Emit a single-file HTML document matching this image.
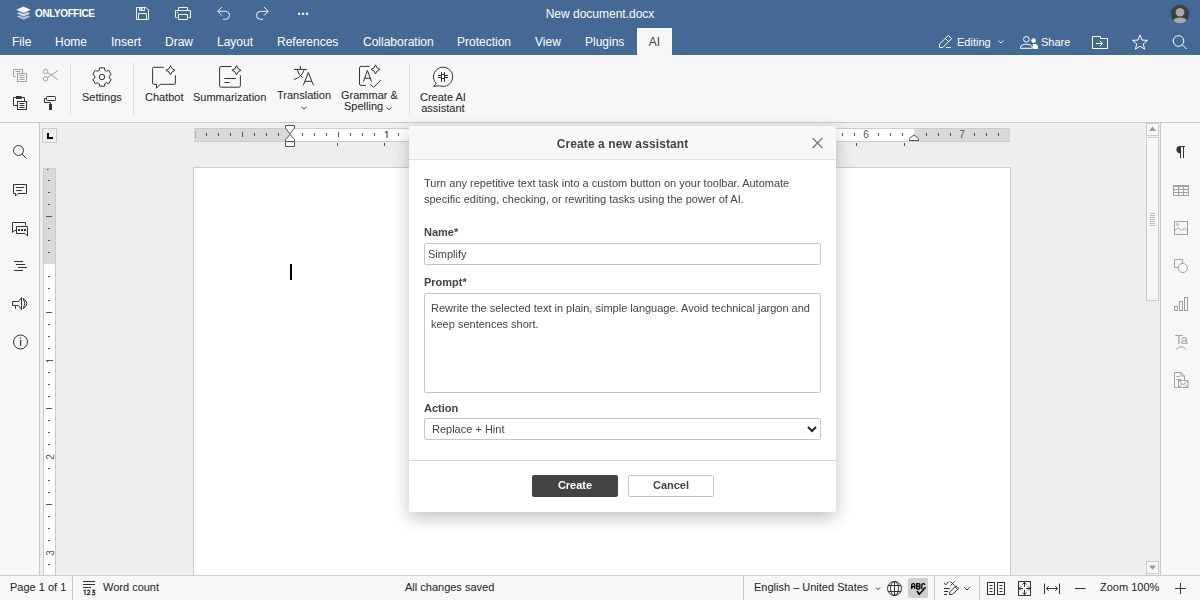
<!DOCTYPE html><html><head><meta charset="utf-8"><style>
*{box-sizing:border-box;margin:0;padding:0}
html,body{width:1200px;height:600px;overflow:hidden;background:#eeeeee;font-family:"Liberation Sans",sans-serif;color:#444}
.abs{position:absolute}
svg{position:absolute;overflow:visible}
#hdr{position:absolute;left:0;top:0;width:1200px;height:55px;background:#446995}
.tab{position:absolute;top:28px;height:27px;color:#fff;font-size:12px;line-height:29px;padding:0 12px;white-space:nowrap}
#toolbar{position:absolute;left:0;top:55px;width:1200px;height:68px;background:#f7f7f7;border-bottom:1px solid #cbcbcb}
.sep{position:absolute;top:8px;width:1px;height:52px;background:#dfdfdf}
.lbl{position:absolute;font-size:11px;color:#222;text-align:center;line-height:11px;white-space:nowrap}
#lside{position:absolute;left:0;top:123px;width:40px;height:452px;background:#f7f7f7;border-right:1px solid #cbcbcb}
#rside{position:absolute;left:1160px;top:123px;width:40px;height:452px;background:#f7f7f7;border-left:1px solid #cbcbcb}
#status{position:absolute;left:0;top:575px;width:1200px;height:25px;background:#f7f7f7;border-top:1px solid #cbcbcb}
.st{position:absolute;font-size:11px;color:#222;line-height:11px;white-space:nowrap;top:6px}
#page{position:absolute;left:193px;top:167px;width:818px;height:420px;background:#fff;border:1px solid #cbcbcb}
#dlg{position:absolute;left:409px;top:126px;width:427px;height:386px;background:#fff;border-radius:3px;box-shadow:0 6px 17px rgba(0,0,0,0.24);overflow:hidden;will-change:transform}
#dlg .t{position:absolute;font-size:11px;color:#444;line-height:16px;white-space:nowrap}
#dlg .b{position:absolute;font-size:11px;font-weight:bold;color:#444;line-height:11px;white-space:nowrap}
.inp{position:absolute;left:15px;width:397px;border:1px solid #c6c6c6;border-radius:2px;background:#fff}
</style></head><body>
<div id="hdr">
<div class="tab" style="left:0px">File</div>
<div class="tab" style="left:43px">Home</div>
<div class="tab" style="left:99px">Insert</div>
<div class="tab" style="left:153px">Draw</div>
<div class="tab" style="left:205px">Layout</div>
<div class="tab" style="left:265px">References</div>
<div class="tab" style="left:351px">Collaboration</div>
<div class="tab" style="left:445px">Protection</div>
<div class="tab" style="left:523px">View</div>
<div class="tab" style="left:573px">Plugins</div>
<div class="abs" style="left:637px;top:28px;width:35px;height:27px;background:#f7f7f7;color:#444;font-size:12px;line-height:29px;text-align:center">AI</div>
<div class="abs" style="left:0;top:0;width:1200px;height:28px;line-height:29px;text-align:center;color:#fff;font-size:12px">New document.docx</div>
<div class="abs" style="left:35px;top:7px;font-size:10px;font-weight:bold;color:#fff;letter-spacing:-0.4px;line-height:13px">ONLYOFFICE</div>
<div class="abs" style="left:957px;top:37px;font-size:11px;color:#fff;line-height:11px">Editing</div>
<div class="abs" style="left:1041px;top:37px;font-size:11px;color:#fff;line-height:11px">Share</div>
<svg style="left:0;top:0" width="1200" height="55" viewBox="0 0 1200 55">
<g fill="#fff">
 <path d="M23.5 6.8 L30.3 9.8 L23.5 12.8 L16.8 9.8 Z" stroke="#fff" stroke-width="0.4" stroke-linejoin="round"/>
 <path d="M16.8 13.3 L19.3 12.2 L23.5 14.1 L27.8 12.2 L30.3 13.3 L23.5 16.4 Z" opacity="0.78"/>
 <path d="M16.8 16.5 L19.3 15.4 L23.5 17.3 L27.8 15.4 L30.3 16.5 L23.5 19.8 Z" opacity="0.6"/>
</g>
<g fill="none" stroke="#fff" stroke-width="1" opacity="0.92">
 <path d="M136.5 7.5 H146 L148.5 10 V19.5 H136.5 Z"/>
 <path d="M138.5 19.5 V13.5 H146.5 V19.5"/>
 <path d="M139.5 7.5 V10.5 H144.5 V7.5"/>
 <path d="M177.5 17.5 H175.5 V10.5 H190.5 V17.5 H188.5"/>
 <path d="M178.5 10.5 V7.5 H187.5 V10.5"/>
 <path d="M178.5 14.5 H187.5 V19.5 H178.5 Z"/>
 <path d="M222 7 L217.8 11.3 L222 15.6 M218 11.3 H225.5 A4 4 0 0 1 225.5 19.3 H223"/>
 <path d="M264 7 L268.2 11.3 L264 15.6 M268 11.3 H260.5 A4 4 0 0 0 260.5 19.3 H263"/>
</g>
<g fill="#fff" opacity="0.92">
 <rect x="177" y="12" width="1.2" height="1.2"/>
 <rect x="140.5" y="8" width="2" height="2"/>
 <rect x="298" y="12.7" width="2.2" height="2.2"/>
 <rect x="302" y="12.7" width="2.2" height="2.2"/>
 <rect x="306" y="12.7" width="2.2" height="2.2"/>
</g>
<circle cx="1180" cy="14" r="9.3" fill="#3b3f46"/>
<circle cx="1180" cy="12.2" r="4.3" fill="#a8aab0"/>
<path d="M1173.30 20.46 A7.6 5.8 0 0 1 1186.70 20.46 A9.3 9.3 0 0 1 1173.30 20.46 Z" fill="#a8aab0"/>
<g fill="none" stroke="#fff" stroke-width="1">
 <path d="M939.5 47.5 V44.2 L948.3 35.4 L951.6 38.7 L942.8 47.5 Z M945.4 38.4 L948.6 41.6"/>
 <path d="M946 47.5 H951"/>
 <path d="M998.5 40.5 L1001 43 L1003.5 40.5"/>
 <circle cx="1026.4" cy="39.3" r="2.8"/>
 <path d="M1020.5 48.3 V47.3 C1020.5 43.2 1032.3 43.2 1032.3 47.3 V48.3 Z"/>
 <path d="M1092.5 36.5 H1100.5 V38.5 H1107.5 V48.5 H1092.5 Z"/>
 <path d="M1096 43.5 H1102.5 M1099.8 40.8 L1102.5 43.5 L1099.8 46.2"/>
 <path d="M1140.00 34.90 L1142.00 40.05 L1147.51 40.36 L1143.23 43.85 L1144.64 49.19 L1140.00 46.20 L1135.36 49.19 L1136.77 43.85 L1132.49 40.36 L1138.00 40.05 Z" stroke-linejoin="round"/>
 <circle cx="1178.5" cy="41" r="5.3"/>
 <path d="M1182.3 44.8 L1186.5 49"/>
</g>
<g fill="#fff"><circle cx="1033.6" cy="40.6" r="2.3"/><path d="M1032.8 49 V44 H1035 C1037 44 1038 45 1038 47 V49 Z"/></g>
</svg>
</div>
<div id="toolbar">
<div class="sep" style="left:70px"></div>
<div class="sep" style="left:133px"></div>
<div class="sep" style="left:409px"></div>
<div class="lbl" style="left:82px;top:37px">Settings</div>
<div class="lbl" style="left:145px;top:37px">Chatbot</div>
<div class="lbl" style="left:193px;top:37px">Summarization</div>
<div class="lbl" style="left:277px;top:35px">Translation</div>
<div class="lbl" style="left:341px;top:35px">Grammar &amp;</div>
<div class="lbl" style="left:344px;top:46px">Spelling</div>
<div class="lbl" style="left:420px;top:37px">Create AI<br>assistant</div>
</div>
<svg style="left:0;top:0" width="1200" height="123" viewBox="0 0 1200 123">
<g fill="none" stroke="#a0a0a0" stroke-width="1">
 <path d="M15.5 76.5 H13.5 V69.5 H22.5 V73"/>
 <rect x="17.5" y="73.5" width="9" height="8"/>
 <path d="M19.5 75.5 H24.5 M19.5 77.5 H24.5 M19.5 79.5 H24.5"/>
 <path d="M15.5 71.5 H20.5"/>
 <circle cx="45.5" cy="71.5" r="2.2"/><circle cx="45.5" cy="78.8" r="2.2"/>
 <path d="M47.5 72.6 L58 79.8 M47.5 77.7 L58 70.5"/>
</g>
<g fill="none" stroke="#333" stroke-width="1">
 <path d="M17 97.5 H13.5 V105.5 H17"/>
 <path d="M21 97.5 H24.5 V101"/>
 <rect x="17.5" y="101.5" width="9" height="8"/>
 <path d="M19.5 103.5 H24.5 M19.5 105.5 H24.5 M19.5 107.5 H24.5"/>
 <rect x="46.5" y="96.5" width="9" height="4" rx="0.8"/>
 <path d="M46.5 98.5 H44.5 V102.5 H50.5 V104"/>
</g>
<g fill="#333"><rect x="16" y="96" width="5.5" height="3"/><rect x="49" y="104" width="3" height="6"/></g>
<g fill="none" stroke="#333" stroke-width="1">
 <path d="M99.19 70.37 L99.54 67.82 L104.46 67.82 L104.81 70.37 A7.2 7.2 0 0 1 106.33 71.25 L108.72 70.28 L111.18 74.54 L109.15 76.12 A7.2 7.2 0 0 1 109.15 77.88 L111.18 79.46 L108.72 83.72 L106.33 82.75 A7.2 7.2 0 0 1 104.81 83.63 L104.46 86.18 L99.54 86.18 L99.19 83.63 A7.2 7.2 0 0 1 97.67 82.75 L95.28 83.72 L92.82 79.46 L94.85 77.88 A7.2 7.2 0 0 1 94.85 76.12 L92.82 74.54 L95.28 70.28 L97.67 71.25 A7.2 7.2 0 0 1 99.19 70.37 Z"/>
 <circle cx="102" cy="77" r="2.7"/>
 <path d="M163.8 67.3 H153.6 Q152.6 67.3 152.6 68.3 V83.3 Q152.6 84.3 153.6 84.3 H156.5 V88.3 L160.3 84.3 H174.4 Q175.4 84.3 175.4 83.3 V75.3"/>
 <path d="M170.50 65.70 Q171.33 69.47 175.10 70.30 Q171.33 71.13 170.50 74.90 Q169.67 71.13 165.90 70.30 Q169.67 69.47 170.50 65.70Z"/>
 <path d="M231.5 66.5 H221.1 Q219.6 66.5 219.6 68 V85.7 Q219.6 87.2 221.1 87.2 H238.9 Q240.4 87.2 240.4 85.7 V75.3"/>
 <path d="M224.3 78.5 H235.8 M224.3 82.5 H229.8"/>
 <path d="M236.50 65.70 Q237.33 69.47 241.10 70.30 Q237.33 71.13 236.50 74.90 Q235.67 71.13 231.90 70.30 Q235.67 69.47 236.50 65.70Z"/>
 <path d="M294 69.4 H306.9 M300.4 66 V69.4 M297.2 69.6 Q299 75.5 302.5 77.5 M304 70.2 Q301.5 77.5 294 79.5"/>
 <path d="M303.3 85.3 L308.3 72.5 L313.5 85.3 M304.8 81.3 H312"/>
 <path d="M369.8 66.4 H361 Q359.5 66.4 359.5 67.9 V83.9 Q359.5 85.4 361 85.4 H365.9"/>
 <path d="M363.5 81.6 L367.4 70.3 L371.5 81.6 M364.6 78.3 H370.4"/>
 <path d="M375.50 64.90 Q376.31 68.59 380.00 69.40 Q376.31 70.21 375.50 73.90 Q374.69 70.21 371.00 69.40 Q374.69 68.59 375.50 64.90Z"/>
 <path d="M370.3 84 L373.5 87.3 L380.8 80.2"/>
 <path d="M436.2 83.5 A9.6 9.6 0 1 1 439.7 85.8 L433.6 86.4 Z"/>
 <rect x="441.5" y="74.5" width="3" height="4"/>
 <path d="M441.5 72 V74.5 M444.5 72 V74.5 M441.5 78.5 V82 M444.5 78.5 V82 M438 75.5 H441.5 M438 77.5 H441.5 M444.5 75.5 H448 M444.5 77.5 H448"/>
 <path d="M301.5 106.8 L304 109.3 L306.5 106.8 M386.5 107.3 L389 109.8 L391.5 107.3"/>
</g>
</svg>
<div id="lside"></div>
<svg style="left:0;top:123px" width="40" height="452" viewBox="0 123 40 452">
<g fill="none" stroke="#333" stroke-width="1">
 <circle cx="18.5" cy="150.5" r="5"/><path d="M22 154 L26.5 158.5"/>
 <path d="M13.5 184.5 H26.5 V193.5 H18 L15.5 196 V193.5 H13.5 Z"/>
 <path d="M16 187.5 H24 M16 190.5 H22"/>
 <path d="M25.5 225.5 V222.5 H12.5 V232.5 L14.5 230.5 H16"/>
 <path d="M16.5 226.5 H27.5 V236 L25 233.5 H16.5 Z"/>
 <path d="M14 261.5 H23 M16 264.5 H25 M18 267.5 H27 M14 270.5 H23"/>
 <path d="M12.5 301.5 H18.5 L21.5 297.5 V309.5 L18.5 305.5 H12.5 Z M15.5 305.5 V308.8"/>
 <path d="M23.3 298.3 Q26.3 303.5 23.3 308.7 M23.3 298.3 Q30.3 303.5 23.3 308.7"/>
 <circle cx="20.5" cy="342" r="7"/>
</g>
<g fill="#333"><rect x="18" y="229" width="2" height="2"/><rect x="21" y="229" width="2" height="2"/><rect x="24" y="229" width="2" height="2"/>
<rect x="20" y="337.5" width="1.2" height="1.3"/><rect x="20" y="340" width="1.2" height="6"/></g>
</svg>
<div id="page"></div>
<div class="abs" style="left:290px;top:264px;width:2px;height:16px;background:#000"></div>
<div class="abs" style="left:194px;top:128px;width:816px;height:14px;background:#fff;border-top:1px solid #cbcbcb;border-bottom:1px solid #cbcbcb"></div>
<div class="abs" style="left:194px;top:128px;width:96px;height:14px;background:#d9d9d9;border-top:1px solid #cbcbcb;border-bottom:1px solid #cbcbcb"></div>
<div class="abs" style="left:914px;top:128px;width:96px;height:14px;background:#d9d9d9;border-top:1px solid #cbcbcb;border-bottom:1px solid #cbcbcb"></div>
<div class="abs" style="left:43px;top:168px;width:13px;height:407px;background:#fff;border-left:1px solid #cbcbcb;border-right:1px solid #cbcbcb"></div>
<div class="abs" style="left:43px;top:168px;width:13px;height:96px;background:#d9d9d9;border:1px solid #cbcbcb;border-bottom:none"></div>
<div class="abs" style="left:42px;top:128px;width:15px;height:15px;background:#efefef;border:1px solid #cbcbcb"></div>
<svg style="left:0;top:0" width="60" height="160" viewBox="0 0 60 160"><path d="M47 133 H49 V137 H53 V139 H47 Z" fill="#000"/></svg>
<svg style="left:0;top:0" width="1200" height="600" viewBox="0 0 1200 600"><g fill="#555"><rect x="206" y="133" width="1" height="3"/><rect x="218" y="133" width="1" height="3"/><rect x="230" y="133" width="1" height="3"/><rect x="242" y="132" width="1" height="5"/><rect x="254" y="133" width="1" height="3"/><rect x="266" y="133" width="1" height="3"/><rect x="278" y="133" width="1" height="3"/><rect x="302" y="133" width="1" height="3"/><rect x="314" y="133" width="1" height="3"/><rect x="326" y="133" width="1" height="3"/><rect x="338" y="132" width="1" height="5"/><rect x="350" y="133" width="1" height="3"/><rect x="362" y="133" width="1" height="3"/><rect x="374" y="133" width="1" height="3"/><path d="M386.2 131 H387.6 V138 H386.4 V132.6 L385 133.5 V132.3 Z" fill="#555"/><rect x="398" y="133" width="1" height="3"/><rect x="410" y="133" width="1" height="3"/><rect x="422" y="133" width="1" height="3"/><rect x="434" y="132" width="1" height="5"/><rect x="446" y="133" width="1" height="3"/><rect x="458" y="133" width="1" height="3"/><rect x="470" y="133" width="1" height="3"/><text x="482" y="137.6" font-size="10" text-anchor="middle" fill="#555" font-family="Liberation Sans">2</text><rect x="494" y="133" width="1" height="3"/><rect x="506" y="133" width="1" height="3"/><rect x="518" y="133" width="1" height="3"/><rect x="530" y="132" width="1" height="5"/><rect x="542" y="133" width="1" height="3"/><rect x="554" y="133" width="1" height="3"/><rect x="566" y="133" width="1" height="3"/><text x="578" y="137.6" font-size="10" text-anchor="middle" fill="#555" font-family="Liberation Sans">3</text><rect x="590" y="133" width="1" height="3"/><rect x="602" y="133" width="1" height="3"/><rect x="614" y="133" width="1" height="3"/><rect x="626" y="132" width="1" height="5"/><rect x="638" y="133" width="1" height="3"/><rect x="650" y="133" width="1" height="3"/><rect x="662" y="133" width="1" height="3"/><text x="674" y="137.6" font-size="10" text-anchor="middle" fill="#555" font-family="Liberation Sans">4</text><rect x="686" y="133" width="1" height="3"/><rect x="698" y="133" width="1" height="3"/><rect x="710" y="133" width="1" height="3"/><rect x="722" y="132" width="1" height="5"/><rect x="734" y="133" width="1" height="3"/><rect x="746" y="133" width="1" height="3"/><rect x="758" y="133" width="1" height="3"/><text x="770" y="137.6" font-size="10" text-anchor="middle" fill="#555" font-family="Liberation Sans">5</text><rect x="782" y="133" width="1" height="3"/><rect x="794" y="133" width="1" height="3"/><rect x="806" y="133" width="1" height="3"/><rect x="818" y="132" width="1" height="5"/><rect x="830" y="133" width="1" height="3"/><rect x="842" y="133" width="1" height="3"/><rect x="854" y="133" width="1" height="3"/><text x="866" y="137.6" font-size="10" text-anchor="middle" fill="#555" font-family="Liberation Sans">6</text><rect x="878" y="133" width="1" height="3"/><rect x="890" y="133" width="1" height="3"/><rect x="902" y="133" width="1" height="3"/><rect x="926" y="133" width="1" height="3"/><rect x="938" y="133" width="1" height="3"/><rect x="950" y="133" width="1" height="3"/><text x="962" y="137.6" font-size="10" text-anchor="middle" fill="#555" font-family="Liberation Sans">7</text><rect x="974" y="133" width="1" height="3"/><rect x="986" y="133" width="1" height="3"/><rect x="998" y="133" width="1" height="3"/><rect x="195" y="131" width="1" height="7" fill="#aaa"/><rect x="47" y="169" width="1.6" height="1" fill="#555"/><rect x="337" y="143" width="1" height="3"/><rect x="384" y="143" width="1" height="3"/><rect x="431" y="143" width="1" height="3"/><rect x="478" y="143" width="1" height="3"/><rect x="526" y="143" width="1" height="3"/><rect x="573" y="143" width="1" height="3"/><rect x="620" y="143" width="1" height="3"/><rect x="667" y="143" width="1" height="3"/><rect x="715" y="143" width="1" height="3"/><rect x="762" y="143" width="1" height="3"/><rect x="809" y="143" width="1" height="3"/><rect x="856" y="143" width="1" height="3"/><rect x="904" y="143" width="1" height="3"/><rect x="48" y="180" width="2" height="1"/><rect x="48" y="192" width="2" height="1"/><rect x="48" y="204" width="2" height="1"/><rect x="46" y="216" width="6" height="1"/><rect x="48" y="228" width="2" height="1"/><rect x="48" y="240" width="2" height="1"/><rect x="48" y="252" width="2" height="1"/><rect x="48" y="276" width="2" height="1"/><rect x="48" y="288" width="2" height="1"/><rect x="48" y="300" width="2" height="1"/><rect x="46" y="312" width="6" height="1"/><rect x="48" y="324" width="2" height="1"/><rect x="48" y="336" width="2" height="1"/><rect x="48" y="348" width="2" height="1"/><path d="M46 360 H53 V361 H48.5 L47.5 362.3 H46.6 L47.4 361 H46 Z" fill="#555"/><rect x="48" y="372" width="2" height="1"/><rect x="48" y="384" width="2" height="1"/><rect x="48" y="396" width="2" height="1"/><rect x="46" y="408" width="6" height="1"/><rect x="48" y="420" width="2" height="1"/><rect x="48" y="432" width="2" height="1"/><rect x="48" y="444" width="2" height="1"/><text x="0" y="0" font-size="10" text-anchor="middle" fill="#555" font-family="Liberation Sans" transform="translate(53.8 457) rotate(-90)">2</text><rect x="48" y="468" width="2" height="1"/><rect x="48" y="480" width="2" height="1"/><rect x="48" y="492" width="2" height="1"/><rect x="46" y="504" width="6" height="1"/><rect x="48" y="516" width="2" height="1"/><rect x="48" y="528" width="2" height="1"/><rect x="48" y="540" width="2" height="1"/><text x="0" y="0" font-size="10" text-anchor="middle" fill="#555" font-family="Liberation Sans" transform="translate(53.8 553) rotate(-90)">3</text><rect x="48" y="564" width="2" height="1"/></g><g fill="#fff" stroke="#555" stroke-width="1"><path d="M285.5 125.5 H294.5 V128 L290 134 L285.5 128 Z" stroke-linejoin="round"/><path d="M290 134.5 L294.5 139.5 V146.5 H285.5 V139.5 Z" stroke-linejoin="round"/><path d="M285.5 141.5 H294.5" fill="none"/><path d="M909.5 140.5 V138.5 L914 135 L918.5 138.5 V140.5 Z" stroke-linejoin="round"/></g></svg>
<div class="abs" style="left:1146px;top:123px;width:13px;height:13px;background:#f7f7f7;border:1px solid #cbcbcb"></div>
<div class="abs" style="left:1146px;top:137px;width:13px;height:164px;background:#f7f7f7;border:1px solid #cbcbcb"></div>
<div class="abs" style="left:1146px;top:561px;width:13px;height:13px;background:#f7f7f7;border:1px solid #cbcbcb"></div>
<svg style="left:0;top:0" width="1200" height="600" viewBox="0 0 1200 600"><g fill="#9e9e9e"><path d="M1149 131 H1156 L1152.5 126.5Z"/><path d="M1149 565.5 H1156 L1152.5 570Z"/></g><g fill="#bbb"><rect x="1150" y="213.0" width="5" height="1"/><rect x="1150" y="215.0" width="5" height="1"/><rect x="1150" y="217.0" width="5" height="1"/><rect x="1150" y="219.0" width="5" height="1"/><rect x="1150" y="221.0" width="5" height="1"/><rect x="1150" y="223.0" width="5" height="1"/><rect x="1150" y="225.0" width="5" height="1"/></g></svg>
<div id="rside"></div>
<svg style="left:0;top:0" width="1200" height="600" viewBox="0 0 1200 600">
<path d="M1180 146 H1185 V147 H1184 V158 H1183 V147 H1181 V158 H1180 V153.2 A3.6 3.6 0 0 1 1180 146 Z" fill="#333"/>
<g fill="none" stroke="#a0a0a0" stroke-width="1">
 <rect x="1173.5" y="185.5" width="15" height="10"/>
 <path d="M1173.5 189.5 H1188.5 M1173.5 192.5 H1188.5 M1178.5 185.5 V195.5 M1183.5 185.5 V195.5 M1173.5 186.5 H1188.5"/>
 <rect x="1174.5" y="221.5" width="13" height="13"/>
 <path d="M1174.5 231 L1178 227.5 L1181.5 230.5 L1184.5 228 L1187.5 231"/>
 <circle cx="1177.5" cy="224.5" r="1"/>
 <path d="M1178 267.5 H1174.5 V259.5 H1182.5 V263.3"/>
 <circle cx="1182.8" cy="268" r="4.6"/>
 <rect x="1174.5" y="306.5" width="3" height="4"/><rect x="1179.5" y="301.5" width="3" height="9"/><rect x="1184.5" y="297.5" width="3" height="13"/>
 <path d="M1175.8 349.6 Q1181 343.6 1186.2 349.6"/>
 <path d="M1177.5 387.5 H1174.5 V372.5 H1181 L1184.5 376 V380.5 M1181 372.5 V376 H1184.5"/>
 <path d="M1176.5 376.5 H1179.5 M1176.5 379.5 H1181"/>
 <rect x="1178.5" y="380.5" width="9.5" height="7"/>
 <path d="M1178.5 380.5 L1183.25 384.5 L1188 380.5 M1178.5 387.5 L1182 384.2 M1188 387.5 L1184.5 384.2"/>
</g>
<text x="1181" y="343.5" font-size="12.5" text-anchor="middle" fill="#a0a0a0" font-family="Liberation Sans" letter-spacing="-0.6">Ta</text>
</svg>
<div id="status">
<div class="st" style="left:10px">Page 1 of 1</div>
<div class="abs" style="left:72px;top:0;width:1px;height:25px;background:#cbcbcb"></div>
<div class="st" style="left:103px">Word count</div>
<div class="st" style="left:405px">All changes saved</div>
<div class="abs" style="left:743px;top:0;width:1px;height:25px;background:#cbcbcb"></div>
<div class="st" style="left:754px">English – United States</div>
<div class="abs" style="left:908px;top:2px;width:20px;height:20px;background:#cfcfcf;border-radius:2px"></div>
<div class="abs" style="left:934px;top:0;width:1px;height:25px;background:#cbcbcb"></div>
<div class="abs" style="left:979px;top:0;width:1px;height:25px;background:#cbcbcb"></div>
<div class="st" style="left:1100px">Zoom 100%</div>
</div>
<svg style="left:0;top:0" width="1200" height="600" viewBox="0 0 1200 600">
<g fill="none" stroke="#333" stroke-width="1">
 <path d="M83 581.5 H95 M83 584.5 H95 M83 587.5 H91"/>
 <path d="M83.6 590.9 L85 590 V595 M87.2 591.2 Q87.4 590.1 88.6 590.1 Q89.9 590.1 89.9 591.3 Q89.9 592.1 88.9 592.9 L87.3 594.5 H90.2 M92 590.3 H94.6 L93.1 592.1 Q94.9 592.1 94.9 593.4 Q94.9 594.7 93.4 594.7 Q92.4 594.7 92 594.1" stroke-width="1.1"/>
 <path d="M876 587.5 L878 589.5 L880 587.5"/>
 <circle cx="894.5" cy="588.5" r="7"/>
 <ellipse cx="894.5" cy="588.5" rx="4" ry="7"/>
 <path d="M888 585.5 H901 M888 591.5 H901 M894.5 581.5 V595.5"/>
 <path d="M917 591 L919.3 594.3 L925.5 587.3" stroke="#000" stroke-width="1.6"/>
 <g stroke="#000" stroke-width="1.3">
 <path d="M911.7 589 V585 Q911.7 583.6 913.2 583.6 Q914.7 583.6 914.7 585 V589 M911.7 586.6 H914.7"/>
 <path d="M916.7 589 V583.6 H918.7 Q920 583.6 920 585 Q920 586.2 918.7 586.2 H916.7 M918.7 586.2 Q920 586.2 920 587.6 Q920 589 918.7 589 H916.7"/>
 <path d="M924.8 585 Q924.8 583.6 923.3 583.6 Q921.8 583.6 921.8 585 V589"/>
 </g>
 <path d="M944 583.2 L945.8 584.9 L948.8 581.5 M950.5 581.5 L954.5 585.5 M954.5 581.5 L950.5 585.5"/>
 <path d="M944 588.5 H949.7 M944 591.5 H948 M944 594.5 H947"/>
 <path d="M949.3 594.7 L950 591.7 L956 585.8 L958.7 588.5 L952.7 594.2 Z M955 586.9 L957.6 589.5" stroke-linejoin="round"/>
 <path d="M964.2 587.2 L967 590 L969.8 587.2"/>
 <rect x="987.5" y="582.5" width="7" height="12"/><rect x="997.5" y="582.5" width="7" height="12"/>
 <path d="M989.5 585.5 H992.5 M989.5 588.5 H992.5 M989.5 591.5 H992.5 M999.5 585.5 H1002.5 M999.5 588.5 H1002.5 M999.5 591.5 H1002.5"/>
 <rect x="1018.5" y="581.5" width="12" height="14"/>
 <path d="M1024.5 582 V587 M1024.5 590 V595 M1019 588.5 H1023 M1026 588.5 H1030 M1022.5 584.5 L1024.5 582.5 L1026.5 584.5 M1022.5 592.5 L1024.5 594.5 L1026.5 592.5 M1021 586.5 L1019 588.5 L1021 590.5 M1028 586.5 L1030 588.5 L1028 590.5"/>
 <path d="M1044.5 583.5 V594 M1059.5 583.5 V594 M1046.5 588.5 H1057.5 M1048.8 586.2 L1046.5 588.5 L1048.8 590.8 M1055.2 586.2 L1057.5 588.5 L1055.2 590.8"/>
 <path d="M1075 588.5 H1085.5"/>
 <path d="M1175 588.5 H1186 M1180.5 583 V594"/>
</g>


</svg>
<div id="dlg">
<div class="abs" style="left:0;top:0;width:427px;height:34px;background:#f7f7f7;border-bottom:1px solid #e0e0e0"></div>
<div class="abs" style="left:0;top:11px;width:427px;text-align:center;font-size:12px;font-weight:bold;color:#444;line-height:14px;letter-spacing:0.1px">Create a new assistant</div>
<svg style="left:0;top:0" width="427" height="40" viewBox="409 126 427 40"><path d="M812.5 138 L822.5 148 M822.5 138 L812.5 148" stroke="#777" stroke-width="1.2" fill="none"/></svg>
<div class="t" style="left:15px;top:49px">Turn any repetitive text task into a custom button on your toolbar. Automate<br>specific editing, checking, or rewriting tasks using the power of AI.</div>
<div class="b" style="left:15px;top:101px">Name*</div>
<div class="inp" style="top:117px;height:22px"></div>
<div class="t" style="left:19px;top:120px">Simplify</div>
<div class="b" style="left:15px;top:151px">Prompt*</div>
<div class="inp" style="top:167px;height:100px"></div>
<div class="t" style="left:22px;top:174px">Rewrite the selected text in plain, simple language. Avoid technical jargon and<br>keep sentences short.</div>
<div class="b" style="left:15px;top:277px">Action</div>
<div class="inp" style="top:292px;height:22px"></div>
<div class="t" style="left:23px;top:295px">Replace + Hint</div>
<svg style="left:0;top:0" width="427" height="386" viewBox="409 126 427 386"><path d="M808 427 L812 431 L816 427" stroke="#222" stroke-width="2" fill="none"/></svg>
<div class="abs" style="left:0;top:334px;width:427px;height:1px;background:#dadada"></div>
<div class="abs" style="left:123px;top:349px;width:86px;height:22px;background:#444;border-radius:2px;color:#fff;font-size:11px;font-weight:bold;text-align:center;line-height:20px">Create</div>
<div class="abs" style="left:219px;top:349px;width:86px;height:22px;background:#fff;border:1px solid #c6c6c6;border-radius:2px;color:#444;font-size:11px;font-weight:bold;text-align:center;line-height:18px">Cancel</div>
</div>
</body></html>
